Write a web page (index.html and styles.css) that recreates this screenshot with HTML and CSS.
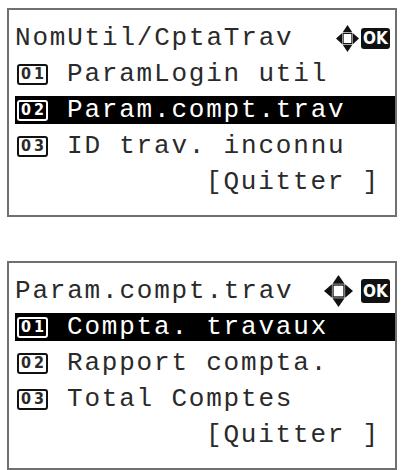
FILE: index.html
```html
<!DOCTYPE html>
<html lang="fr">
<head>
    <meta charset="UTF-8">
    <meta name="viewport" content="width=device-width, initial-scale=1.0">
    <title>Param. compt. trav</title>
    <link rel="stylesheet" href="styles.css">
</head>
<body>
    <!-- Ecran 1 -->
    <div class="panel">
        <div class="row title">
            <span>NomUtil/CptaTrav</span>
            <span class="keys">
                <svg class="cross" viewBox="0 0 24 24" preserveAspectRatio="none">
                    <polygon points="12,0 17,6.5 7,6.5"/>
                    <polygon points="12,24 17,17.5 7,17.5"/>
                    <polygon points="0,12 6.5,7 6.5,17"/>
                    <polygon points="24,12 17.5,7 17.5,17"/>
                    <rect x="7.5" y="7.5" width="9" height="9" fill="#fff" stroke="#111" stroke-width="1"/>
                </svg>
                <span class="ok">OK</span>
            </span>
        </div>
        <div class="row"><span class="slot"><span class="num">01</span></span>ParamLogin util</div>
        <div class="row selected"><span class="slot"><span class="num">02</span></span>Param.compt.trav</div>
        <div class="row"><span class="slot"><span class="num">03</span></span>ID trav. inconnu</div>
        <div class="row quit">[Quitter ]</div>
    </div>

    <!-- Ecran 2 -->
    <div class="panel second">
        <div class="row title">
            <span>Param.compt.trav</span>
            <span class="keys">
                <svg class="cross" viewBox="0 0 24 24" preserveAspectRatio="none">
                    <polygon points="12,0 17,6.5 7,6.5"/>
                    <polygon points="12,24 17,17.5 7,17.5"/>
                    <polygon points="0,12 6.5,7 6.5,17"/>
                    <polygon points="24,12 17.5,7 17.5,17"/>
                    <rect x="7.5" y="7.5" width="9" height="9" fill="#fff" stroke="#111" stroke-width="1"/>
                </svg>
                <span class="ok">OK</span>
            </span>
        </div>
        <div class="row selected"><span class="slot"><span class="num">01</span></span>Compta. travaux</div>
        <div class="row"><span class="slot"><span class="num">02</span></span>Rapport compta.</div>
        <div class="row"><span class="slot"><span class="num">03</span></span>Total Comptes</div>
        <div class="row quit">[Quitter ]</div>
    </div>
</body>
</html>
```

FILE: styles.css
```css
body {
    margin: 0;
    background: #fff;
    font-family: "Liberation Mono", monospace;
    color: #2a2a2a;
}
.panel {
    box-sizing: border-box;
    width: 390px;
    height: 209px;
    margin: 8px 0 0 7px;
    padding: 14px 0 0 6px;
    border: 2px solid #707070;
    display: flex;
    flex-direction: column;
    gap: 8px;
}
.second {
    margin-top: 44px;
}
.row {
    display: flex;
    align-items: center;
    height: 28px;
    font-size: 26px;
    letter-spacing: 1.8px;
    white-space: pre;
}
.title {
    justify-content: space-between;
    padding-right: 5px;
}
.selected {
    background: #000;
    color: #fff;
}
.slot {
    display: flex;
    align-items: center;
    width: 52px;
    flex-shrink: 0;
}
.num {
    display: flex;
    align-items: center;
    justify-content: center;
    box-sizing: border-box;
    width: 31px;
    height: 21px;
    margin-left: 2px;
    border: 2px solid #111;
    border-radius: 3px;
    font-family: "DejaVu Sans Condensed", "Liberation Sans", sans-serif;
    font-weight: bold;
    font-size: 16px;
    line-height: 1;
    letter-spacing: 3px;
    padding-left: 3px;
}
.selected .num {
    border-color: #fff;
}
.quit {
    padding-left: 191px;
}
.keys {
    display: flex;
    align-items: center;
    gap: 2px;
}
.cross {
    width: 23px;
    height: 27px;
    fill: #111;
}
.ok {
    display: flex;
    align-items: center;
    justify-content: center;
    width: 29px;
    height: 21px;
    background: #111;
    color: #fff;
    border-radius: 3px;
    font-family: "DejaVu Sans Condensed", "Liberation Sans", sans-serif;
    font-weight: bold;
    font-size: 17px;
    letter-spacing: 0;
}
.second .keys {
    gap: 8px;
}
.second .cross {
    width: 29px;
    height: 32px;
}
.second .ok {
    height: 24px;
}
```
